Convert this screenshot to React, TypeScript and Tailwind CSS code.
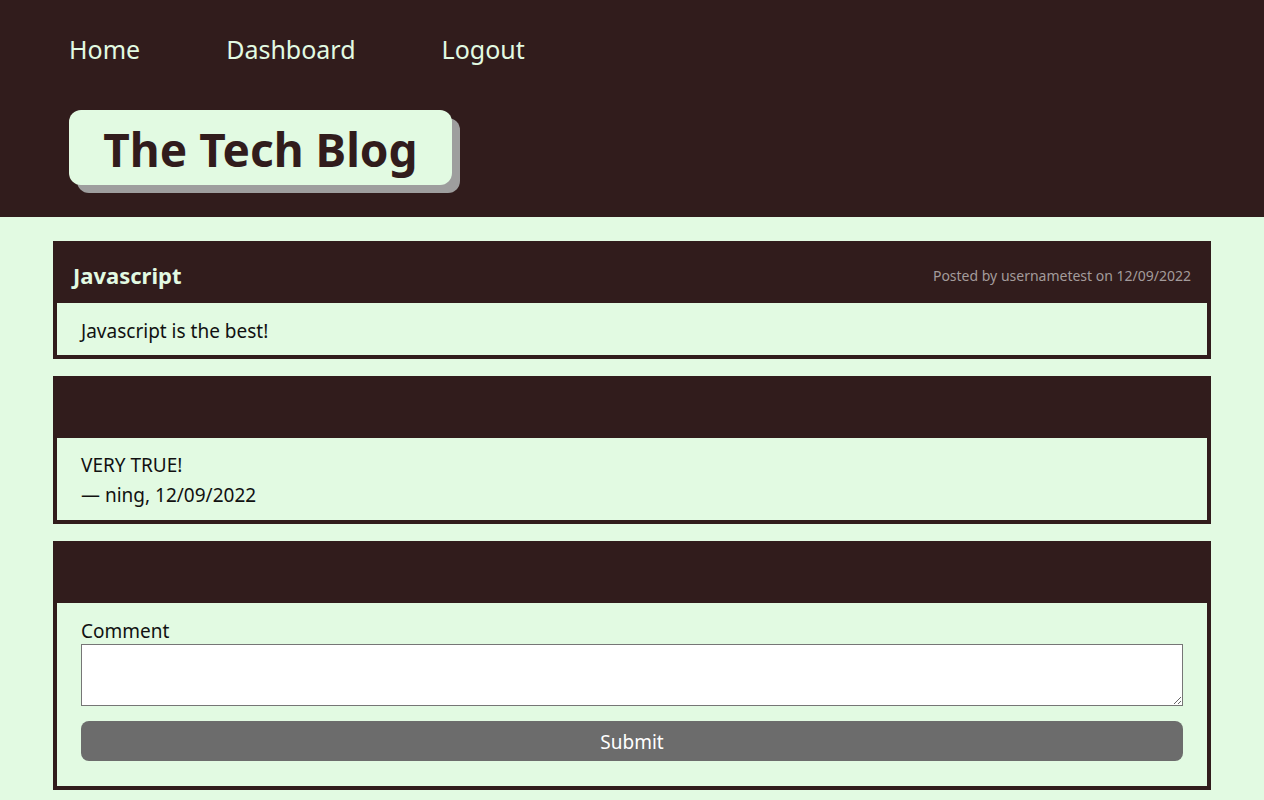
export default function App() {
  return (
    <div className="min-h-screen bg-[#e2fae2] font-['Noto_Sans',sans-serif] text-[#111]">
      <header className="bg-[#311c1c] h-[217px] pl-[69px] pt-[22px]">
        <nav className="flex gap-[86px] text-[25px] leading-[54px] text-[#e2fae2]">
          <a>Home</a>
          <a>Dashboard</a>
          <a>Logout</a>
        </nav>
        <div className="mt-[34px] inline-flex h-[75px] w-[383px] items-center justify-center rounded-[12px] bg-[#e2fae2] pt-[3px] shadow-[8px_8px_0_#9e9e9e]">
          <h1 className="text-[46px] font-bold text-[#311c1c]">The Tech Blog</h1>
        </div>
      </header>

      <main className="px-[53px] pt-[24px] flex flex-col gap-[17px]">
        <section className="border-4 border-[#311c1c]">
          <div className="bg-[#311c1c] h-[58px] px-4 pt-[2px] flex items-center justify-between">
            <h2 className="text-[22px] font-bold text-[#e2fae2]">Javascript</h2>
            <span className="text-[14px] text-[#a39b9b]">Posted by usernametest on 12/09/2022</span>
          </div>
          <div className="px-6 pt-[13px] pb-[9px] text-[19px] leading-[30px]">Javascript is the best!</div>
        </section>

        <section className="border-4 border-[#311c1c]">
          <div className="bg-[#311c1c] h-[58px]" />
          <div className="px-6 pt-[12px] pb-[10px] text-[19px] leading-[30px]">
            <p>VERY TRUE!</p>
            <p>— ning, 12/09/2022</p>
          </div>
        </section>

        <section className="border-4 border-[#311c1c]">
          <div className="bg-[#311c1c] h-[58px]" />
          <form className="px-6 pt-[11px] pb-[25px] text-[19px]">
            <label className="block leading-[30px] pt-[2px] -mb-[2px]">Comment</label>
            <textarea className="block w-full h-[62px] bg-white border border-[#767676]" />
            <button
              type="button"
              className="mt-[15px] w-full h-[40px] rounded-[8px] bg-[#6c6c6c] pt-[2px] text-white text-[19px]"
            >
              Submit
            </button>
          </form>
        </section>
      </main>
    </div>
  )
}
